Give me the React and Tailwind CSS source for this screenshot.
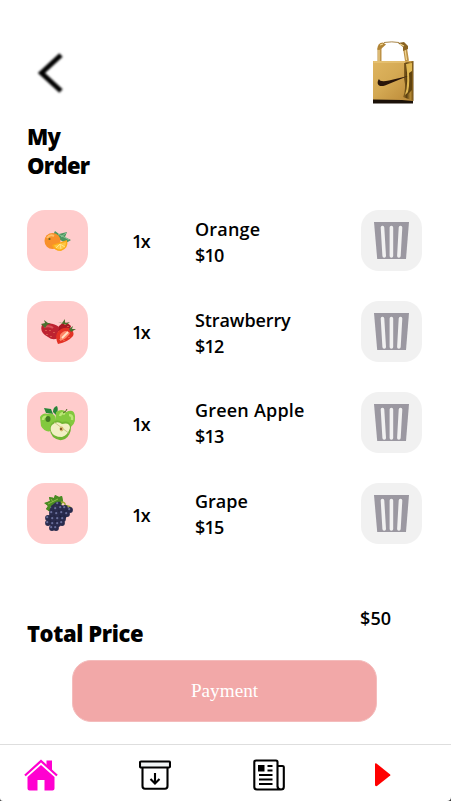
import React from "react";

const sans = "font-['Open_Sans','Noto_Sans',sans-serif]";

function BackIcon() {
  return (
    <svg width="34" height="50" viewBox="0 0 34 50" fill="none" className="blur-[0.9px]">
      <path d="M27 7L7.500 25L27 43" stroke="#000" strokeWidth="5" />
    </svg>
  );
}

function Padlock() {
  return (
    <svg width="44" height="64" viewBox="0 0 44 64">
      <defs>
        <linearGradient id="gold" x1="0" y1="0" x2="1" y2="1">
          <stop offset="0" stopColor="#dfb560" />
          <stop offset="0.45" stopColor="#d4a953" />
          <stop offset="1" stopColor="#b98736" />
        </linearGradient>
        <linearGradient id="side" x1="0" y1="0" x2="1" y2="0">
          <stop offset="0" stopColor="#9a7028" />
          <stop offset="0.35" stopColor="#5a3f10" />
          <stop offset="0.7" stopColor="#b58934" />
          <stop offset="1" stopColor="#6f4c11" />
        </linearGradient>
      </defs>
      <path d="M7.500 20V7M35 20L33 7" fill="none" stroke="#bd9247" strokeWidth="4" />
      <path d="M7 20V9M34.500 19L33 8" fill="none" stroke="#f1d591" strokeWidth="1.200" />
      <path d="M5.500 9Q5 1.500 11 1.500L14 3.500L9 8Z" fill="#b18435" />
      <path d="M26 2L32 1L36 5V8L31 10L31 6Z" fill="#8b6422" />
      <path d="M28 3L32 5M8 4L11 3" stroke="#f3d994" strokeWidth="1.200" />
      <path d="M12 1.500Q20 .2 27 1.500" fill="none" stroke="#a98649" strokeWidth="1" />
      <path d="M1 20H41V60H1Z" fill="url(#gold)" />
      <path d="M32 22L41.500 20V60L31 56Q34.500 47 32 38Z" fill="url(#side)" />
      <path d="M34 23L40 22V30L37.500 50L33 54Q37 42 34 23Z" fill="#e0b852" />
      <path d="M37 32L40 30V49L35 54Q38 46 37 32Z" fill="#60430f" />
      <path d="M1.500 21H33" stroke="#edcd83" strokeWidth="1" />
      <path d="M7 38C4.500 41 5 47 13 44.500L36 35L17 39.500Q8 41.500 7 38Z" fill="#28150a" />
      <path d="M1 58.500L30 59L41 60V62.500H1Z" fill="#1b1109" />
    </svg>
  );
}

function Orange() {
  return (
    <svg width="28" height="22" viewBox="0 0 28 22">
      <path d="M9 5L11 1L15 4L23 2L21 7L27 10L22 13L12 8Z" fill="#4d9560" />
      <path d="M14 4L22 8L25 10M17 7L22 3" stroke="#9bd0a0" strokeWidth="0.8" fill="none" />
      <circle cx="8.500" cy="11" r="8" fill="#f8902a" />
      <path d="M3 8Q6 4 10 6" stroke="#ffc06b" strokeWidth="2" fill="none" />
      <circle cx="5.500" cy="9" r="1.100" fill="#68631c" />
      <path d="M8 15L23 10Q25 18 17 21Q10 21 8 15Z" fill="#fbaa18" />
      <path d="M10 15.500L22 12Q22 18 16.500 19.500Q12 19.500 10 15.500Z" fill="#ffc644" />
      <path d="M16 14L12 18M16 14L17 19M16 14L21 17" stroke="#fff0a4" strokeWidth="0.700" />
    </svg>
  );
}

function Strawberry() {
  return (
    <svg width="36" height="26" viewBox="0 0 36 26">
      <path d="M19 7Q25 0 31 7L29 13L17 12Z" fill="#a91723" />
      <path d="M2 6Q12 2 19 8L18 19Q13 22 8 18Q-1 13 2 6Z" fill="#bd2230" />
      <path d="M4 8Q10 6 13 9" stroke="#d95158" strokeWidth="2" fill="none" />
      <path d="M17 14Q21 8 29 9Q35 12 33 17Q28 23 18 25Q15 19 17 14Z" fill="#e33225" />
      <path d="M20 16Q25 9 30 14Q28 19 20 22Z" fill="#ff8565" />
      <path d="M22 19L28 13" stroke="#ffe2c4" strokeWidth="1.800" />
      <path d="M1 5L5 4L4 1L8 4L11 4L7 6L5 9ZM18 3L22 4L25 0V4L30 3L26 6ZM29 10L33 7L32 10L36 10L31 13Z" fill="#4b702f" />
      <path d="M6 11V12M10 11V12M14 13V14M7 15V16M11 17V18M20 20V21M24 21V22M29 18V19M25 5V6M28 7V8" stroke="#ee8c68" />
    </svg>
  );
}

function GreenApple() {
  return (
    <svg width="38" height="36" viewBox="0 0 38 36">
      <path d="M5 3L12 4L14 9L7 8ZM14 7Q14 2 18 1Q20 5 17 10Z" fill="#288538" />
      <path d="M17 7Q23 3 27 7Q35 3 36 11Q37 21 28 24L16 21Z" fill="#83c83e" />
      <path d="M1 12Q4 7 9 9Q16 7 17 15Q18 23 12 26Q6 28 2 21Z" fill="#83c83e" />
      <path d="M4 15Q4 11 8 12M21 11Q22 7 26 9M30 10Q34 10 33 15" stroke="#bce777" strokeWidth="2.500" fill="none" />
      <ellipse cx="9" cy="14" rx="2.500" ry="3" fill="#427b21" />
      <path d="M24 8Q27 7 28 4" stroke="#49631f" fill="none" />
      <path d="M12 19Q17 13 23 17Q31 15 32 22Q32 30 26 34Q20 37 14 32Q9 26 12 19Z" fill="#71b533" />
      <path d="M13 20Q18 15 23 19Q31 17 31 23Q29 30 23 32Q14 32 12 26Q11 22 13 20Z" fill="#f2efc4" />
      <path d="M15 17L31 29" stroke="#b7b76e" strokeWidth="0.700" />
      <ellipse cx="22.500" cy="24" rx="2" ry="2.400" fill="#d3b66d" />
      <circle cx="22" cy="24" r="1" fill="#683b18" />
    </svg>
  );
}

const grapes = [
  [10, 10], [15, 10], [8, 14], [13, 15], [18, 14], [22, 14], [27, 16],
  [9, 19], [14, 20], [19, 19], [24, 20], [5, 24], [10, 25], [15, 25], [20, 25],
  [5, 29], [10, 30], [15, 30], [19, 29], [9, 34], [13, 34],
];

function Grape() {
  return (
    <svg width="30" height="39" viewBox="0 0 30 39">
      <path d="M1 9L7 7L6 3L11 4L12 1L16 3L19 2L20 8L18 12L11 12L7 18L3 15L5 12Z" fill="#4a8b23" />
      <path d="M5 9L15 6L9 4M15 6L17 11" stroke="#8cbb46" fill="none" />
      <path d="M18 8Q23 8 22 12Q26 11 28 14" stroke="#9baa31" strokeWidth="1.500" fill="none" />
      <path d="M9 12L16 13L27 15L25 21L20 28L13 35L6 30L6 22Z" fill="#1f203b" />
      {grapes.map(([x, y], i) => (
        <g key={i}>
          <circle cx={x} cy={y} r="2.900" fill="#292b4d" />
          <circle cx={x - 0.8} cy={y - 0.8} r="1.100" fill="#686e9a" />
        </g>
      ))}
      <path d="M2 9L7 7L6 3L11 4L12 1L16 3L19 2L20 7L13 8L8 12L6 17L3 15L5 12Z" fill="#4a8b23" />
      <path d="M5 10L15 5M8 5L10 8" stroke="#8cbb46" fill="none" />
    </svg>
  );
}

function Trash() {
  return (
    <svg width="36" height="37" viewBox="0 0 36 37">
      <path d="M0 0H35L32 37H3.200Z" fill="#9b98a1" />
      <path d="M8.500 5.500L10.200 34M17.400 5.500V34M26.500 5.500L24.900 34" stroke="#f1f1f1" strokeWidth="3.600" strokeLinecap="round" />
    </svg>
  );
}

function HomeIcon() {
  return (
    <svg width="34" height="32" viewBox="0 0 34 32">
      <path d="M1 16.500L17 2L33 16.500" fill="none" stroke="#ff00d0" strokeWidth="2.200" />
      <path d="M22.500 1.500H28V12L22.500 7Z" fill="#ff00d0" />
      <path d="M3.500 18L17 6L30.500 18V29.500Q30.500 31.500 28.500 31.500H20.500V21H13.500V31.500H5.500Q3.500 31.500 3.500 29.500Z" fill="#ff00d0" />
    </svg>
  );
}

function BoxIcon() {
  return (
    <svg width="32" height="30" viewBox="0 0 32 30" fill="none" stroke="#000" strokeWidth="2.100">
      <rect x="1" y="1.500" width="30" height="6" rx="1" fill="#f1f4f5" />
      <path d="M3.500 8V26Q3.500 28.700 6 28.700H26Q28.500 28.700 28.500 26V8M16 13V23M11.500 19L16 23.500L20.500 19" />
    </svg>
  );
}

function NewsIcon() {
  return (
    <svg width="32" height="32" viewBox="0 0 32 32" fill="none" stroke="#000" strokeWidth="2.100">
      <path d="M24.500 28V3Q24.500 1.500 23 1.500H3Q1.300 1.500 1.300 3V28Q1.300 30.500 4 30.500H28Q30.800 30.500 30.800 28V8Q30.800 7 29.500 7H25M24.500 27Q24.500 30.500 28 30.500" />
      <path d="M5 6H11.500V12.500H5Z" fill="#000" stroke="none" />
      <path d="M14.500 7H19.500M14.500 11.500H19.500M6 16H19.500M6 20.500H19.500M6 25H19.500" strokeWidth="2" />
    </svg>
  );
}

function PlayIcon() {
  return (
    <svg width="16" height="24" viewBox="0 0 16 24">
      <path d="M0 1Q0 0 1.500 .5L15.200 11.500Q15.500 12 15.200 12.500L2 23Q0 23.500 0 22Z" fill="#f00" />
    </svg>
  );
}

const items = [
  { name: "Orange", price: "$10", Fruit: Orange, spacing: "tracking-[0.2px]", qty: "pt-px", offset: "pt-[3px]" },
  { name: "Strawberry", price: "$12", Fruit: Strawberry, spacing: "tracking-[-0.1px]", qty: "pt-px", offset: "pt-[3px]" },
  { name: "Green Apple", price: "$13", Fruit: GreenApple, spacing: "tracking-[0.2px]", qty: "pt-[3px]", offset: "pt-px" },
  { name: "Grape", price: "$15", Fruit: Grape, spacing: "tracking-[0px]", qty: "pt-[3px]", offset: "pt-px" },
];

export default function App() {
  return (
    <div className={`relative flex h-[801px] w-[451px] flex-col overflow-hidden bg-white text-black ${sans}`}>
      <header className="flex h-[122px] shrink-0 items-start justify-between pl-[34px] pr-[35px] pt-[41px]">
        <div className="pt-[7px]"><BackIcon /></div>
        <Padlock />
      </header>
      <h1 className="ml-[27px] h-[88px] w-[80px] shrink-0 text-[22px] leading-[29px] font-extrabold tracking-[-0.7px]">My Order</h1>
      <main className="flex shrink-0 flex-col gap-[30px] px-[27px]">
        {items.map(({ name, price, Fruit, spacing, qty, offset }) => (
          <div key={name} className="flex h-[61px] w-[395px] items-center text-[18px] leading-[26px] font-semibold">
            <div className="flex h-[61px] w-[61px] items-center justify-center rounded-[18px] bg-[#ffcccc]"><Fruit /></div>
            <div className={`ml-[44px] w-[63px] tracking-[-1.5px] ${qty}`}>1x</div>
            <div className={`flex-1 ${offset}`}>
              <div className={spacing}>{name}</div>
              <div className="tracking-[-0.8px]">{price}</div>
            </div>
            <div className="flex h-[61px] w-[61px] items-center justify-center rounded-[18px] bg-[#f1f1f1]"><Trash /></div>
          </div>
        ))}
      </main>
      <section className="flex h-[116px] shrink-0 items-start justify-between pl-[27px] pr-[60px] pt-[61px]">
        <h2 className="pt-[14px] text-[22px] leading-[29px] font-extrabold tracking-[-0.4px]">Total Price</h2>
        <div className="text-[18px] leading-[26px] font-semibold">$50</div>
      </section>
      <button className="ml-[72px] h-[62px] w-[305px] shrink-0 rounded-[19px] border border-[#f4bcbc] bg-[#f2a8a8] font-['Liberation_Serif',serif] text-[19.2px] text-white">Payment</button>
      <nav className="mt-auto flex h-[57px] shrink-0 items-center border-t border-[#dedede] pt-[3px]">
        <div className="ml-[24px] w-[115px]"><HomeIcon /></div>
        <div className="w-[114px]"><BoxIcon /></div>
        <div className="w-[122px]"><NewsIcon /></div>
        <PlayIcon />
      </nav>
      <svg className="absolute bottom-0 left-0" width="3" height="3"><path d="M0 0Q0 3 3 3H0Z" fill="#444" /></svg>
      <svg className="absolute right-0 bottom-0" width="4" height="4"><path d="M4 0Q4 4 0 4H4Z" fill="#333" /></svg>
    </div>
  );
}
